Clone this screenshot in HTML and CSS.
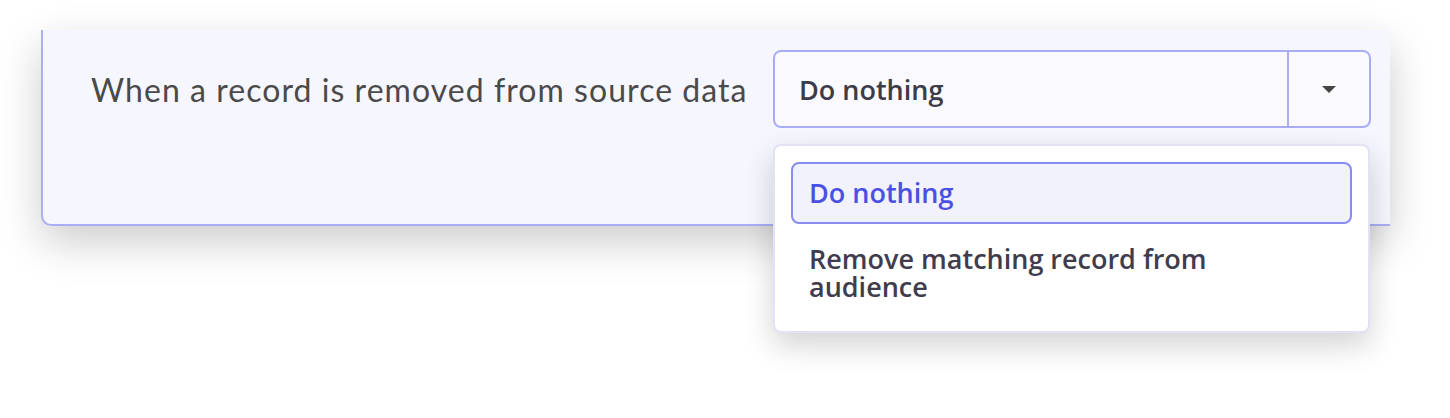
FILE: index.html
```html
<!DOCTYPE html>
<html>
<head>
<meta charset="utf-8">
<link rel="stylesheet" href="styles.css">
</head>
<body>
<div class="stage">
  <div class="card">
    <div class="row">
      <span class="label">When a record is removed from source data</span>
      <div class="select-wrap">
        <div class="select">
          <span class="value">Do nothing</span>
          <span class="arrow"><span class="caret"></span></span>
        </div>
        <div class="menu">
          <div class="option selected">Do nothing</div>
          <div class="option"><span class="opt-text">Remove matching record from audience</span></div>
        </div>
      </div>
    </div>
  </div>
</div>
</body>
</html>
```
FILE: styles.css
```css
html, body {
  margin: 0;
  padding: 0;
  background: #ffffff;
}
.stage {
  padding: 30px 0 0 41px;
  height: 418px;
  box-sizing: border-box;
  overflow: hidden;
}
.card {
  width: 1349px;
  height: 196px;
  box-sizing: border-box;
  background: #f6f6fe;
  border-left: 2px solid #abaef7;
  border-bottom: 2px solid #abaef7;
  border-bottom-left-radius: 10px;
  box-shadow: 0 16px 44px rgba(0, 0, 0, 0.2);
  padding: 20px 19px 0 48px;
}
.row {
  display: flex;
  align-items: center;
}
.label {
  font-family: "Lato", sans-serif;
  font-size: 32px;
  letter-spacing: 1.05px;
  color: #4a4a4a;
  white-space: nowrap;
}
.select-wrap {
  margin-left: auto;
  position: relative;
  width: 598px;
}
.select {
  display: flex;
  height: 78px;
  box-sizing: border-box;
  border: 2px solid #aaadf6;
  border-radius: 8px;
  background: #f9f9fe;
}
.value {
  flex: 1;
  display: flex;
  align-items: center;
  padding-left: 24px;
  font-family: "Open Sans", sans-serif;
  font-weight: 600;
  font-size: 27px;
  color: #3d3b4a;
}
.arrow {
  width: 80px;
  border-left: 2px solid #aaadf6;
  display: flex;
  align-items: center;
  justify-content: center;
}
.caret {
  width: 0;
  height: 0;
  border-left: 7px solid transparent;
  border-right: 7px solid transparent;
  border-top: 7px solid #444444;
}
.menu {
  position: absolute;
  top: 94px;
  left: 0;
  width: 597px;
  height: 189px;
  box-sizing: border-box;
  background: #ffffff;
  border: 2px solid #e3e2f4;
  border-radius: 8px;
  padding: 16px;
  box-shadow: 0 12px 30px rgba(0, 0, 0, 0.18);
}
.option {
  font-family: "Open Sans", sans-serif;
  font-weight: 600;
  font-size: 27px;
  line-height: 28px;
  color: #3f3d4d;
  box-sizing: border-box;
  padding: 19px 18px 14px;
}
.option.selected {
  height: 62px;
  display: flex;
  align-items: center;
  padding: 0 16px;
  border: 2px solid #878cf0;
  border-radius: 8px;
  background: #f2f2fd;
  color: #4b50e3;
  margin-bottom: 2px;
}
.opt-text {
  display: block;
  max-width: 430px;
}
```
